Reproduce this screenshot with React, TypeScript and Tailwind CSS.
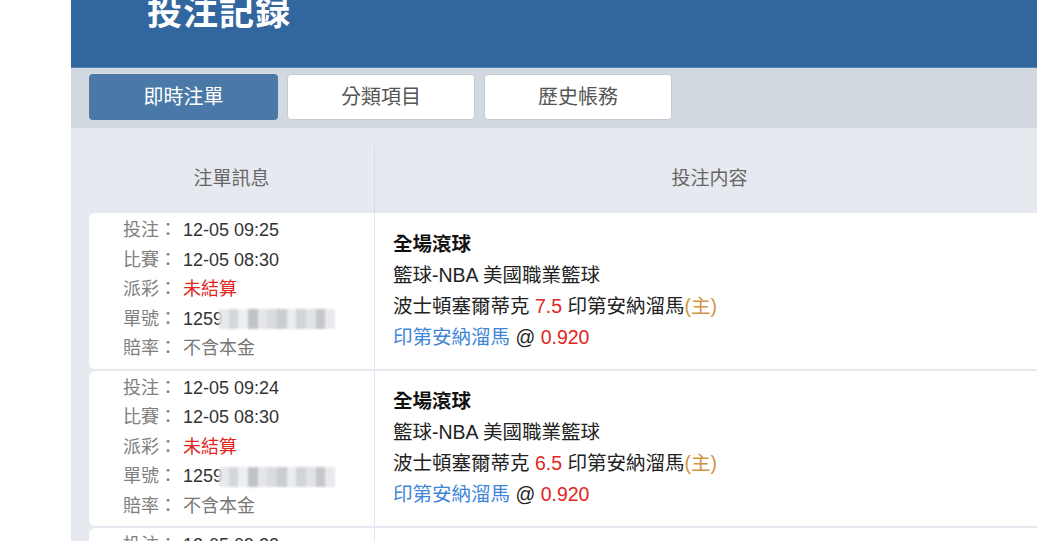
import React from "react";

interface Bet {
  betTime: string;
  matchTime: string;
  handicap: string;
  pick: string;
  odds: string;
}

const bets: Bet[] = [
  { betTime: "12-05 09:25", matchTime: "12-05 08:30", handicap: "7.5", pick: "印第安納溜馬", odds: "0.920" },
  { betTime: "12-05 09:24", matchTime: "12-05 08:30", handicap: "6.5", pick: "印第安納溜馬", odds: "0.920" },
  { betTime: "12-05 09:22", matchTime: "12-05 08:30", handicap: "6.5", pick: "印第安納溜馬", odds: "0.920" },
];

const font = { fontFamily: '"Liberation Sans", "Noto Sans CJK TC", sans-serif' };

// pixelated blur that hides the rest of the ticket number
function Mosaic() {
  const cells = ["#e4e6ea", "#cfd2d7", "#eceef0", "#b9bcc2", "#e1e3e6", "#d6d8dc", "#c4c7cc", "#e8eaec", "#cdd0d4", "#dfe1e4", "#bfc2c7", "#e6e8ea"];
  return (
    <span className="inline-flex -ml-[4px] h-[20px] w-[116px] align-middle opacity-90 blur-[1px]">
      {cells.map((c, i) => (
        <span key={i} className="flex-1 h-full" style={{ backgroundColor: c }} />
      ))}
    </span>
  );
}

function Row({ bet }: { bet: Bet }) {
  const label = "text-[#808080] mr-[6px]";
  return (
    <div className="flex shrink-0 bg-white rounded-l-md mb-[2px]">
      <div className="w-[285px] shrink-0 pl-[34px] pt-[3px] pb-[5px] text-[18px] leading-[29.5px]">
        <div><span className={label}>投注：</span><span className="text-[#333]">{bet.betTime}</span></div>
        <div><span className={label}>比賽：</span><span className="text-[#333]">{bet.matchTime}</span></div>
        <div><span className={label}>派彩：</span><span className="text-[#e0261e]">未結算</span></div>
        <div className="flex items-center"><span className={label}>單號：</span><span className="text-[#333]">1259</span><Mosaic /></div>
        <div><span className={label}>賠率：</span><span className="text-[#777]">不含本金</span></div>
      </div>
      <div className="flex-1 border-l border-[#e3e6eb] pl-[18px] flex flex-col justify-center text-[19.5px] leading-[31px] text-[#222]">
        <div className="font-bold text-[#111]">全場滾球</div>
        <div>籃球-NBA 美國職業籃球</div>
        <div>
          波士頓塞爾蒂克 <span className="text-[#e0261e]">{bet.handicap}</span> 印第安納溜馬<span className="text-[#d4933f]">(主)</span>
        </div>
        <div>
          <span className="text-[#3f86d8]">{bet.pick}</span> @ <span className="text-[#e0261e]">{bet.odds}</span>
        </div>
      </div>
    </div>
  );
}

export default function App() {
  const tabs = ["即時注單", "分類項目", "歷史帳務"];
  return (
    <div className="w-[1037px] h-[541px] overflow-hidden bg-white flex" style={font}>
      <div className="w-[71px] shrink-0 bg-white" />
      <div className="w-[991px] shrink-0 flex flex-col bg-[#e6e9ef]">
        {/* Header */}
        <div className="h-[68px] shrink-0 bg-[#32669e] border-b border-[#5a86b6] pl-[76px] overflow-hidden">
          <h1
            className="text-white text-[35px] leading-none font-bold tracking-[1px] -mt-[8px]"
            style={{ fontFamily: '"Noto Sans CJK TC", serif' }}
          >
            投注記録
          </h1>
        </div>

        {/* Tabs */}
        <div className="h-[60px] shrink-0 bg-[#d3d9e1] flex items-start gap-[9px] pl-[18px] pt-[6px]">
          {tabs.map((t, i) => (
            <div
              key={t}
              className={
                i === 0
                  ? "w-[189px] h-[46px] rounded-[4px] bg-[#4b79a7] text-white flex items-center justify-center text-[20px]"
                  : "w-[188px] h-[46px] rounded-[4px] bg-white border border-[#c5ccd6] text-[#555] flex items-center justify-center text-[20px]"
              }
            >
              {t}
            </div>
          ))}
        </div>

        {/* Table */}
        <div className="flex-1 min-h-0 pl-[18px] pr-[18px] pt-[17px]">
          <div className="flex h-[68px] text-[19px] text-[#666]">
            <div className="w-[285px] shrink-0 flex items-center justify-center">注單訊息</div>
            <div className="flex-1 border-l border-[#d6dae1] flex items-center justify-center">投注内容</div>
          </div>
          {bets.map((b, i) => (
            <Row key={i} bet={b} />
          ))}
        </div>
      </div>
    </div>
  );
}
